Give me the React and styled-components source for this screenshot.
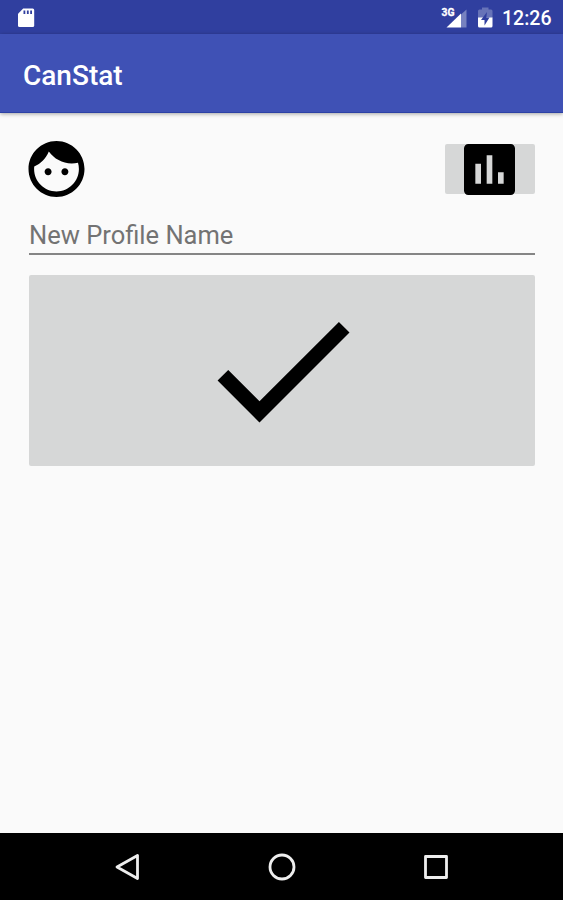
import React from "react";
import styled, { createGlobalStyle } from "styled-components";

const GlobalStyle = createGlobalStyle`
  * { box-sizing: border-box; }
  body { margin: 0; background: #fafafa; font-family: Roboto, sans-serif; }
`;

const Screen = styled.div`
  display: flex;
  flex-direction: column;
  width: 563px;
  height: 900px;
  overflow: hidden;
  background: #fafafa;
`;

const StatusBar = styled.header`
  display: flex;
  align-items: center;
  justify-content: space-between;
  flex: none;
  height: 34px;
  padding: 1px 11px 0 17px;
  background: #303f9f;
  color: #fff;
`;

const StatusIcons = styled.div`
  display: flex;
  align-items: center;
`;

const Glyph = styled.svg`
  display: block;
  flex: none;
  width: ${(p) => p.$w}px;
  height: ${(p) => p.$h}px;
  margin-right: ${(p) => p.$gap || 0}px;
`;

const SignalLabel = styled.text`
  font: 700 10.5px Roboto, sans-serif;
  fill: #fff;
  stroke: #fff;
  stroke-width: 0.3px;
`;

const Clock = styled.time`
  width: 50px;
  padding-top: 2px;
  font-size: 19.5px;
  font-weight: 500;
  line-height: 31px;
  white-space: nowrap;
`;

const AppBar = styled.div`
  display: flex;
  align-items: center;
  flex: none;
  height: 79px;
  padding: 6px 23px 0;
  background: #3f51b5;
  border-bottom: 1px solid #2c41a5;
  box-shadow: 0 1px 4px rgba(0, 0, 0, 0.35);
`;

const Title = styled.h1`
  margin: 0;
  color: #fff;
  font-size: 28px;
  font-weight: 500;
  line-height: 32px;
`;

const Content = styled.main`
  flex: 1;
  padding: 28px 28px 0 29px;
`;

const ProfileRow = styled.div`
  display: flex;
  align-items: center;
  justify-content: space-between;
  height: 55px;
  margin-left: -1px;
`;

const Button = styled.button`
  display: flex;
  align-items: center;
  justify-content: center;
  width: ${(p) => p.$width};
  height: ${(p) => p.$height}px;
  padding: ${(p) => p.$padding || "0"};
  border: 0;
  border-radius: 2px;
  background: #d6d7d7;
`;

const NameInput = styled.input`
  display: block;
  width: 100%;
  height: 40px;
  margin: 19px 0 20px;
  padding: 2px 0 0;
  border: 0;
  border-bottom: 2px solid #858585;
  border-radius: 0;
  outline: 0;
  background: transparent;
  font: 400 25.5px Roboto, sans-serif;
  &::placeholder { color: #737373; opacity: 1; }
`;

const NavBar = styled.nav`
  display: flex;
  align-items: center;
  justify-content: space-between;
  flex: none;
  height: 67px;
  padding: 0 113px 0 114px;
  background: #000;
`;

export default function App() {
  return (
    <>
      <GlobalStyle />
      <Screen>
        <StatusBar>
          <Glyph $w={18} $h={22} viewBox="0 0 18 22">
            <path fill="#fff" d="M6.2 1.5H15.7Q17.2 1.5 17.2 3V18.5Q17.2 20 15.7 20H2.5Q1 20 1 18.5V6.7Z" />
            <path fill="#303f9f" d="M6.5 3.5h1.8v3.5H6.5zM9.9 3.5h1.8v3.5H9.9zM13.2 3.5H15v3.5h-1.8z" />
          </Glyph>
          <StatusIcons>
            <Glyph $w={26} $h={24} $gap={11} viewBox="0 0 26 24">
              <path fill="#7782c0" d="M20 8.5 25.5 3.5V21.5H20z" />
              <path fill="#fff" d="M5.5 21.5 20 7.5V21.500z" />
              <SignalLabel x="0.5" y="10" textLength="13" lengthAdjust="spacingAndGlyphs">3G</SignalLabel>
            </Glyph>
            <Glyph $w={15} $h={22} $gap={9} viewBox="0 0 15 22">
              <path fill="#6773b8" d="M4 .5h6.5v2H13q1.5 0 1.5 1.5V11H0V4q0-1.5 1.5-1.5H4z" />
              <path fill="#fff" d="M0 10.5h14.5V19q0 1.500-1.5 1.500H1.5Q0 20.500 0 19z" />
              <path fill="#303f9f" d="M9 5 3 13h3.500v5.500L11.500 10.500H8.300z" />
            </Glyph>
            <Clock>12:26</Clock>
          </StatusIcons>
        </StatusBar>
        <AppBar>
          <Title>CanStat</Title>
        </AppBar>
        <Content>
          <ProfileRow>
            <Glyph $w={57} $h={56} viewBox="2 2 20 20">
              <path d="M9 11.75c-.69 0-1.25.56-1.25 1.25s.56 1.25 1.25 1.25 1.25-.56 1.25-1.25-.56-1.25-1.25-1.25zm6 0c-.69 0-1.25.56-1.25 1.25s.56 1.25 1.25 1.25 1.25-.56 1.25-1.25-.56-1.25-1.25-1.25zM12 2C6.48 2 2 6.48 2 12s4.48 10 10 10 10-4.48 10-10S17.52 2 12 2zm0 18c-4.41 0-8-3.59-8-8 0-.29.02-.58.05-.86 2.36-1.05 4.23-2.98 5.21-5.37C11.07 8.33 14.05 10 17.42 10c.78 0 1.53-.09 2.25-.26.21.71.33 1.47.33 2.26 0 4.41-3.59 8-8 8z" />
            </Glyph>
            <Button $width="90px" $height={50} $padding="1px 1px 0 0" aria-label="Statistics">
              <Glyph $w={51} $h={51} viewBox="3 3 18 18">
                <path d="M19.5 3H4.5C3.7 3 3 3.7 3 4.5v15c0 .8.7 1.5 1.5 1.5h15c.8 0 1.5-.7 1.5-1.5v-15c0-.8-.7-1.5-1.5-1.5zM9 17H7v-7h2v7zm4 0h-2V7h2v10zm4 0h-2v-4h2v4z" />
              </Glyph>
            </Button>
          </ProfileRow>
          <NameInput placeholder="New Profile Name" />
          <Button $width="100%" $height={191} $padding="0 0 1px" aria-label="Save profile">
            <Glyph $w={180} $h={180} viewBox="0 0 24 24">
              <path d="M9 16.17L4.83 12l-1.42 1.41L9 19 21 7l-1.41-1.41z" />
            </Glyph>
          </Button>
        </Content>
        <NavBar>
          <Glyph $w={28} $h={30} viewBox="0 0 28 30" fill="none" stroke="#eee" strokeWidth="2.8" strokeLinejoin="round">
            <path d="M23.5 3.5V26.5L3 15z" />
          </Glyph>
          <Glyph $w={28} $h={28} viewBox="0 0 28 28" fill="none" stroke="#eee" strokeWidth="2.8">
            <circle cx="14" cy="14" r="12" />
          </Glyph>
          <Glyph $w={28} $h={28} viewBox="0 0 28 28" fill="none" stroke="#eee" strokeWidth="2.8" strokeLinejoin="round">
            <rect x="3.5" y="3.5" width="21" height="21" />
          </Glyph>
        </NavBar>
      </Screen>
    </>
  );
}
